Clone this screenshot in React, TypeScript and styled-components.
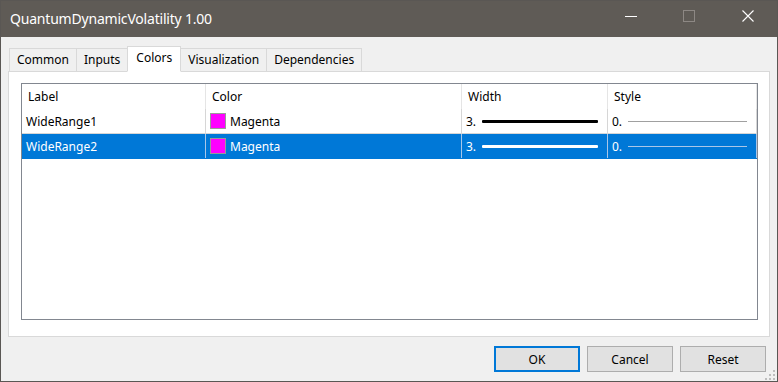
import React from 'react';
import styled, { createGlobalStyle } from 'styled-components';

const GlobalStyle = createGlobalStyle`
  html, body {
    margin: 0;
    padding: 0;
    background: #f0f0f0;
  }
  body {
    font-family: "Noto Sans", "Open Sans", sans-serif;
    font-size: 12px;
    color: #000;
  }
`;

interface LineItem {
  label: string;
  color: string;
  colorName: string;
  width: string;
  style: string;
}

const items: LineItem[] = [
  { label: 'WideRange1', color: '#ff00ff', colorName: 'Magenta', width: '3.', style: '0.' },
  { label: 'WideRange2', color: '#ff00ff', colorName: 'Magenta', width: '3.', style: '0.' },
];

const tabs = ['Common', 'Inputs', 'Colors', 'Visualization', 'Dependencies'];

const App: React.FC = () => {
  const selected = 1;

  return (
    <>
      <GlobalStyle />
      <Window>
        <TitleBar>
          <Title>QuantumDynamicVolatility 1.00</Title>
          <Controls>
            <CtrlButton>
              <svg width="12" height="12" viewBox="0 0 12 12">
                <line x1="0" y1="6.5" x2="12" y2="6.5" stroke="#fff" strokeWidth="1" />
              </svg>
            </CtrlButton>
            <CtrlButton>
              <svg width="12" height="12" viewBox="0 0 12 12">
                <rect x="0.5" y="0.5" width="11" height="11" fill="none" stroke="#8d8884" strokeWidth="1" />
              </svg>
            </CtrlButton>
            <CtrlButton>
              <svg width="12" height="12" viewBox="0 0 12 12">
                <path d="M0.5 0.5 L11.5 11.5 M11.5 0.5 L0.5 11.5" stroke="#fff" strokeWidth="1.1" />
              </svg>
            </CtrlButton>
          </Controls>
        </TitleBar>

        <Body>
          <TabStrip>
            {tabs.map((t) => (
              <Tab key={t} $active={t === 'Colors'}>{t}</Tab>
            ))}
          </TabStrip>

          <Panel>
            <ListView>
              <HeaderRow>
                <HeaderCell>Label</HeaderCell>
                <HeaderCell>Color</HeaderCell>
                <HeaderCell>Width</HeaderCell>
                <HeaderCell>Style</HeaderCell>
              </HeaderRow>
              {items.map((it, i) => {
                const sel = i === selected;
                return (
                  <Row key={it.label} $selected={sel}>
                    <Cell $selected={sel}>{it.label}</Cell>
                    <Cell $selected={sel}>
                      <Swatch style={{ background: it.color }} />
                      {it.colorName}
                    </Cell>
                    <Cell $selected={sel}>
                      <Num>{it.width}</Num>
                      <LineSample $thick={3} $color={sel ? '#ffffff' : '#000000'} />
                    </Cell>
                    <Cell $selected={sel}>
                      <Num>{it.style}</Num>
                      <LineSample $thick={1} $color={sel ? '#a9c6e8' : '#a0a0a0'} />
                    </Cell>
                  </Row>
                );
              })}
            </ListView>
          </Panel>

          <Footer>
            <Button $primary>OK</Button>
            <Button>Cancel</Button>
            <Button>Reset</Button>
          </Footer>
          <Grip>
            <svg width="12" height="12" viewBox="0 0 12 12">
              {[
                [8, 0], [4, 4], [8, 4], [0, 8], [4, 8], [8, 8],
              ].map(([x, y]) => (
                <rect key={`${x}-${y}`} x={x + 1} y={y + 1} width="2" height="2" fill="#bdbdbd" />
              ))}
            </svg>
          </Grip>
        </Body>
      </Window>
    </>
  );
};

const Window = styled.div`
  position: relative;
  width: 778px;
  height: 382px;
  box-sizing: border-box;
  border: 1px solid #5a5754;
  background: #f0f0f0;
  display: flex;
  flex-direction: column;
`;

const TitleBar = styled.div`
  height: 36px;
  background: #5f5b56;
  display: flex;
  align-items: center;
  justify-content: space-between;
  padding-left: 9px;
`;

const Title = styled.div`
  color: #ffffff;
  font-size: 14px;
  letter-spacing: -0.2px;
  margin-top: -2px;
`;

const Controls = styled.div`
  display: flex;
  height: 100%;
`;

const CtrlButton = styled.div`
  width: 58px;
  height: 100%;
  display: flex;
  align-items: center;
  justify-content: center;
  margin-top: -3px;

  &:last-child {
    width: 59px;
  }
`;

const Body = styled.div`
  flex: 1;
  display: flex;
  flex-direction: column;
  padding: 9px 7px 0 7px;
`;

const TabStrip = styled.div`
  display: flex;
  align-items: flex-end;
  height: 26px;
  padding-left: 2px;
  margin-bottom: -1px;
  position: relative;
  z-index: 1;
`;

const Tab = styled.div<{ $active?: boolean }>`
  box-sizing: border-box;
  height: ${(p) => (p.$active ? '26px' : '24px')};
  padding: ${(p) => (p.$active ? '0 8px 4px' : '0 7px 1px')};
  margin-left: -1px;
  display: flex;
  align-items: center;
  border: 1px solid #d9d9d9;
  border-bottom: ${(p) => (p.$active ? '1px solid #ffffff' : '1px solid #d9d9d9')};
  background: ${(p) => (p.$active ? '#ffffff' : '#f0f0f0')};
  position: relative;
  z-index: ${(p) => (p.$active ? 2 : 1)};
  white-space: nowrap;
`;

const Panel = styled.div`
  box-sizing: border-box;
  width: 762px;
  height: 266px;
  background: #ffffff;
  border: 1px solid #d9d9d9;
  padding: 11px 12px 16px 12px;
  display: flex;
`;

const ListView = styled.div`
  flex: 1;
  border: 1px solid #828790;
  background: #ffffff;
`;

const columns = '184px 256px 146px 149px';

const HeaderRow = styled.div`
  display: grid;
  grid-template-columns: ${columns};
  height: 25px;
`;

const HeaderCell = styled.div`
  display: flex;
  align-items: center;
  padding-left: 6px;
  border-right: 1px solid #e5e5e5;
  padding-bottom: 1px;
`;

const Row = styled.div<{ $selected?: boolean }>`
  display: grid;
  grid-template-columns: ${columns};
  height: 25px;
  box-sizing: border-box;
  border-bottom: 1px solid ${(p) => (p.$selected ? '#0078d7' : '#d6d6d6')};
  background: ${(p) => (p.$selected ? '#0078d7' : '#ffffff')};
  color: ${(p) => (p.$selected ? '#ffffff' : '#000000')};
`;

const Cell = styled.div<{ $selected?: boolean }>`
  display: flex;
  align-items: center;
  padding-left: 4px;
  padding-right: 9px;
  border-right: 1px solid ${(p) => (p.$selected ? '#a9c6e8' : '#d6d6d6')};
  white-space: nowrap;
`;

const Swatch = styled.span`
  width: 14px;
  height: 14px;
  border: 1px solid #9a9a9a;
  margin-right: 4px;
  flex-shrink: 0;
`;

const Num = styled.span`
  width: 15px;
  flex-shrink: 0;
`;

const LineSample = styled.span<{ $thick: number; $color: string }>`
  flex: 1;
  height: ${(p) => p.$thick}px;
  background: ${(p) => p.$color};
  border-radius: ${(p) => (p.$thick > 1 ? '1px' : '0')};
  margin-left: 1px;
`;

const Footer = styled.div`
  display: flex;
  justify-content: flex-end;
  gap: 7px;
  padding: 9px 4px 0 0;
`;

const Button = styled.div<{ $primary?: boolean }>`
  box-sizing: border-box;
  width: 86px;
  height: 26px;
  display: flex;
  align-items: center;
  justify-content: center;
  background: #e1e1e1;
  border: ${(p) => (p.$primary ? '2px solid #0078d7' : '1px solid #adadad')};
  font-size: 12px;
`;

const Grip = styled.div`
  position: absolute;
  right: 1px;
  bottom: 1px;
  width: 12px;
  height: 12px;
`;

export default App;
